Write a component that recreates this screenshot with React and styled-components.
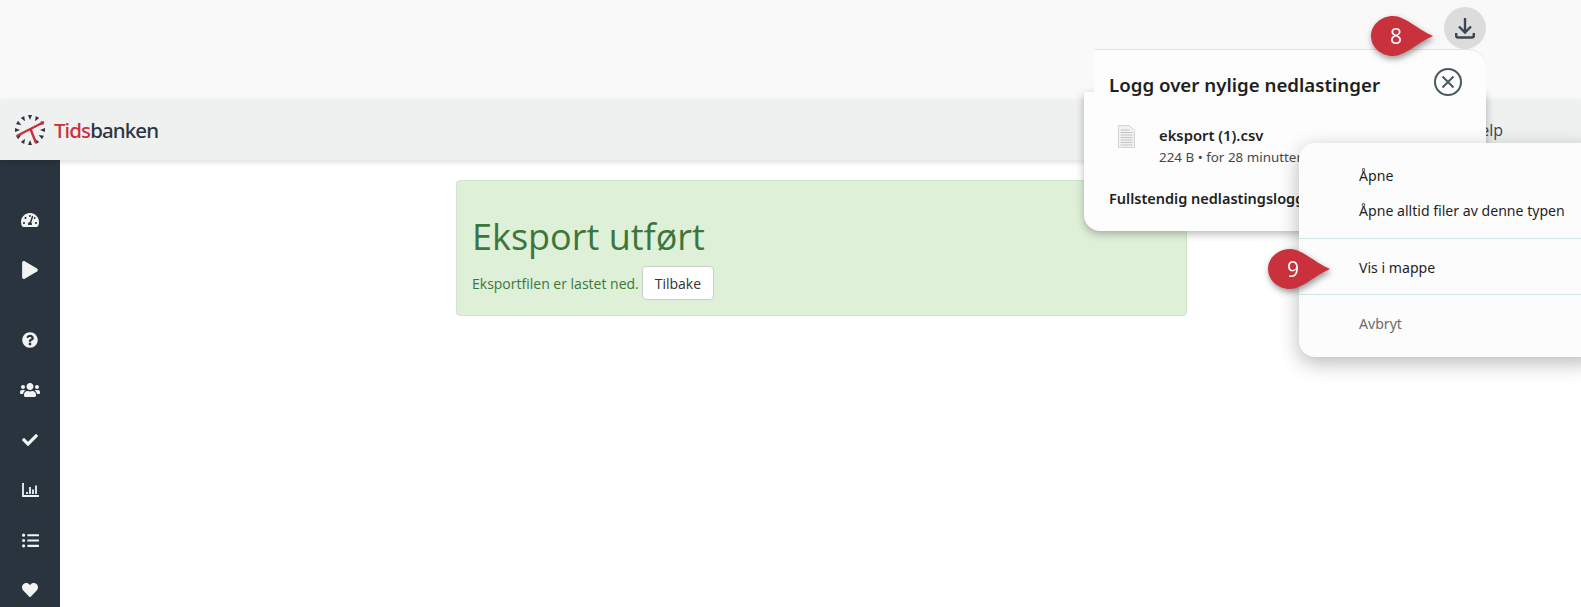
import React from "react";
import styled, { createGlobalStyle } from "styled-components";
import {
  FaTachometerAlt,
  FaPlay,
  FaQuestionCircle,
  FaUsers,
  FaCheck,
  FaListUl,
  FaHeart,
} from "react-icons/fa";

const GlobalStyle = createGlobalStyle`
  html, body {
    margin: 0;
    padding: 0;
    height: 100%;
    overflow: hidden;
    background: #fff;
    font-family: "Open Sans", "Liberation Sans", sans-serif;
  }
  #root {
    height: 100%;
  }
`;

const Page = styled.div`
  position: relative;
  width: 1581px;
  height: 607px;
  overflow: hidden;
  display: flex;
  flex-direction: column;
`;

const BrowserBar = styled.div`
  height: 100px;
  flex: none;
  background: #f9f9f9;
`;

const Header = styled.header`
  height: 60px;
  flex: none;
  display: flex;
  align-items: center;
  justify-content: space-between;
  padding: 0 78px 0 14px;
  background: #eff1f0;
  box-shadow: 0 2px 6px rgba(0, 0, 0, 0.14);
  position: relative;
  z-index: 1;
`;

const Logo = styled.div`
  display: flex;
  align-items: center;
  gap: 8px;
`;

const LogoText = styled.span`
  font-family: "Noto Sans", sans-serif;
  font-size: 20.5px;
  font-weight: 500;
  letter-spacing: -0.9px;
  color: #2b3640;
`;

const LogoAccent = styled.span`
  color: #c9303c;
`;

const HelpLink = styled.span`
  font-size: 16px;
  color: #3a4650;
`;

const Body = styled.div`
  flex: 1;
  display: flex;
  min-height: 0;
`;

const Sidebar = styled.nav`
  width: 60px;
  flex: none;
  background: #29343e;
  display: flex;
  flex-direction: column;
  align-items: center;
  padding-top: 35px;
  color: #f2f4f4;
`;

const NavItem = styled.div`
  height: 50px;
  flex: none;
  display: flex;
  align-items: center;
  justify-content: center;
  font-size: ${(p) => p.$size || 18}px;
  margin-top: ${(p) => (p.$gap ? "20px" : "0")};
`;

const Main = styled.main`
  flex: 1;
  padding: 20px 0 0 396px;
`;

const Alert = styled.section`
  box-sizing: border-box;
  width: 731px;
  height: 136px;
  padding: 33px 15px 0;
  background: #dff0d8;
  border: 1px solid #d0e6c6;
  border-radius: 4px;
  color: #3c763d;
`;

const AlertTitle = styled.h1`
  margin: 0 0 6px;
  font-size: 36px;
  font-weight: 400;
  line-height: 46px;
`;

const AlertRow = styled.p`
  margin: 0;
  display: flex;
  align-items: center;
  gap: 3px;
  font-size: 14px;
`;

const BackButton = styled.button`
  height: 34px;
  padding: 0 12px;
  background: #fff;
  border: 1px solid #ccc;
  border-radius: 4px;
  color: #333;
  font-family: inherit;
  font-size: 14px;
`;

const DownloadButton = styled.div`
  position: absolute;
  left: 1444px;
  top: 7px;
  width: 42px;
  height: 42px;
  border-radius: 50%;
  background: #dcdcdc;
  display: flex;
  align-items: center;
  justify-content: center;
`;

const Popover = styled.div`
  position: absolute;
  left: 1084px;
  top: 49px;
  width: 402px;
  z-index: 2;
  display: flex;
  flex-direction: column;
`;

const PopoverTop = styled.div`
  position: relative;
  z-index: 1;
  margin-left: 10px;
  height: 43px;
  background: #fdfdfd;
  border-top: 1px solid #e3e3e3;
  border-top-right-radius: 18px;
  box-sizing: border-box;
`;

const PopoverBody = styled.div`
  height: 139px;
  box-sizing: border-box;
  background: #fdfdfd;
  border-radius: 0 0 16px 16px;
  box-shadow: 0 3px 8px rgba(0, 0, 0, 0.28);
`;

const PopoverTitle = styled.div`
  position: absolute;
  z-index: 2;
  left: 25px;
  top: 23px;
  font-family: "Noto Sans", sans-serif;
  font-size: 18.7px;
  font-weight: 600;
  color: #1f1f1f;
`;

const CloseIcon = styled.svg`
  position: absolute;
  z-index: 2;
  left: 349px;
  top: 18px;
  width: 30px;
  height: 30px;
`;

const FileRow = styled.div`
  display: flex;
  align-items: flex-start;
  gap: 24px;
  padding: 33px 0 0 34px;
`;

const FileName = styled.div`
  font-family: "Noto Sans", sans-serif;
  font-size: 14.8px;
  font-weight: 600;
  color: #1f1f1f;
  line-height: 20px;
`;

const FileMeta = styled.div`
  font-family: "Noto Sans", sans-serif;
  font-size: 13.4px;
  color: #474747;
  line-height: 20px;
  margin-top: 2px;
`;

const FullLog = styled.div`
  padding: 21px 0 0 25px;
  font-family: "Noto Sans", sans-serif;
  font-size: 14.5px;
  font-weight: 600;
  color: #1f1f1f;
`;

const ContextMenu = styled.div`
  position: absolute;
  left: 1299px;
  top: 143px;
  width: 300px;
  height: 214px;
  box-sizing: border-box;
  z-index: 3;
  background: #fcfcfc;
  border-radius: 16px;
  box-shadow: 0 6px 20px rgba(0, 0, 0, 0.28);
  display: flex;
  flex-direction: column;
  padding-top: 15px;
`;

const MenuItem = styled.div`
  height: 35px;
  flex: none;
  display: flex;
  align-items: center;
  padding-left: 60px;
  font-family: "Noto Sans", sans-serif;
  font-size: 14.1px;
  color: ${(p) => (p.$muted ? "#6b6b6b" : "#1f1f1f")};
`;

const MenuDivider = styled.div`
  height: 1px;
  flex: none;
  background: #d3e3ea;
  margin: ${(p) => p.$margin};
`;

const Marker = styled.div`
  position: absolute;
  left: ${(p) => p.$left}px;
  top: ${(p) => p.$top}px;
  width: 62px;
  height: 40px;
  z-index: 4;
  filter: drop-shadow(1px 3px 3px rgba(0, 0, 0, 0.4));
`;

const MarkerNumber = styled.span`
  position: absolute;
  left: 13px;
  top: 6px;
  width: 24px;
  text-align: center;
  font-family: "Open Sans", sans-serif;
  font-size: 21px;
  line-height: 28px;
  color: #fff;
`;

const navItems = [
  { icon: <FaTachometerAlt /> },
  { icon: <FaPlay /> },
  { icon: <FaQuestionCircle />, size: 16, gap: true },
  { icon: <FaUsers />, size: 20 },
  { icon: <FaCheck />, size: 16 },
  { icon: <ChartIcon /> },
  { icon: <FaListUl />, size: 17 },
  { icon: <FaHeart />, size: 16 },
];

function ChartIcon() {
  return (
    <svg width="17" height="14" viewBox="0 0 17 14" fill="none" stroke="currentColor">
      <path d="M1 0v13h16" strokeWidth="1.800" />
      <path d="M5 11V9M8 11V4M11 11V6.500M14 11V2.500" strokeWidth="1.800" />
    </svg>
  );
}

function ClockLogo() {
  const ticks = [0, 30, 60, 90, 120, 150, 180, 210, 240, 270, 300, 330];
  return (
    <svg width="32" height="32" viewBox="0 0 32 32">
      {ticks.map((angle) => (
        <path
          key={angle}
          d="M14 1h4l-2 5z"
          fill="#2b3640"
          transform={`rotate(${angle} 16 16)`}
        />
      ))}
      <path d="M2.700 22L30 8M16.500 15L22 29" stroke="#c9303c" strokeWidth="2.400" fill="none" />
    </svg>
  );
}

function MarkerPin() {
  return (
    <svg width="62" height="40" viewBox="0 0 62 40">
      <path
        d="M22 0C34 0 46 13 62 20C46 27 34 40 22 40C10 40 0 31 0 20C0 9 10 0 22 0Z"
        fill="#c9323d"
      />
    </svg>
  );
}

export default function App() {
  return (
    <Page>
      <GlobalStyle />
      <BrowserBar />
      <Header>
        <Logo>
          <ClockLogo />
          <LogoText>
            <LogoAccent>Tids</LogoAccent>banken
          </LogoText>
        </Logo>
        <HelpLink>Help</HelpLink>
      </Header>
      <Body>
        <Sidebar>
          {navItems.map((item, index) => (
            <NavItem key={index} $gap={item.gap} $size={item.size}>
              {item.icon}
            </NavItem>
          ))}
        </Sidebar>
        <Main>
          <Alert>
            <AlertTitle>Eksport utført</AlertTitle>
            <AlertRow>
              Eksportfilen er lastet ned.
              <BackButton>Tilbake</BackButton>
            </AlertRow>
          </Alert>
        </Main>
      </Body>

      <DownloadButton>
        <svg width="20" height="21" viewBox="0 0 20 21" fill="none" stroke="#3c4650" strokeWidth="2.400">
          <path d="M10 0v14M4 8.500l6 6 6-6" />
          <path d="M1.200 15v2.500a2 2 0 0 0 2 2h13.600a2 2 0 0 0 2-2V15" />
        </svg>
      </DownloadButton>

      <Popover>
        <PopoverTop />
        <PopoverBody>
          <FileRow>
            <svg width="17" height="23" viewBox="0 0 17 23">
              <path d="M.5.5h11l5 5v17H.5z" fill="#f2f2f2" stroke="#d4d4d4" />
              <path d="M2.500 5h9M2.500 7.500h12M2.500 10h12M2.500 12.500h12M2.500 15h12M2.500 17.500h12M2.500 20h12" stroke="#c4c4c4" />
            </svg>
            <div>
              <FileName>eksport (1).csv</FileName>
              <FileMeta>224 B • for 28 minutter siden</FileMeta>
            </div>
          </FileRow>
          <FullLog>Fullstendig nedlastingslogg</FullLog>
        </PopoverBody>
        <PopoverTitle>Logg over nylige nedlastinger</PopoverTitle>
        <CloseIcon viewBox="0 0 30 30" fill="none" stroke="#4a5a5c" strokeWidth="2">
          <circle cx="15" cy="15" r="13" />
          <path d="M9.500 9.500l11 11M20.500 9.500l-11 11" />
        </CloseIcon>
      </Popover>

      <ContextMenu>
        <MenuItem>Åpne</MenuItem>
        <MenuItem>Åpne alltid filer av denne typen</MenuItem>
        <MenuDivider $margin="10px 0 11px" />
        <MenuItem>Vis i mappe</MenuItem>
        <MenuDivider $margin="9px 0 11px" />
        <MenuItem $muted>Avbryt</MenuItem>
      </ContextMenu>

      <Marker $left={1371} $top={16}>
        <MarkerPin />
        <MarkerNumber>8</MarkerNumber>
      </Marker>
      <Marker $left={1268} $top={249}>
        <MarkerPin />
        <MarkerNumber>9</MarkerNumber>
      </Marker>
    </Page>
  );
}
